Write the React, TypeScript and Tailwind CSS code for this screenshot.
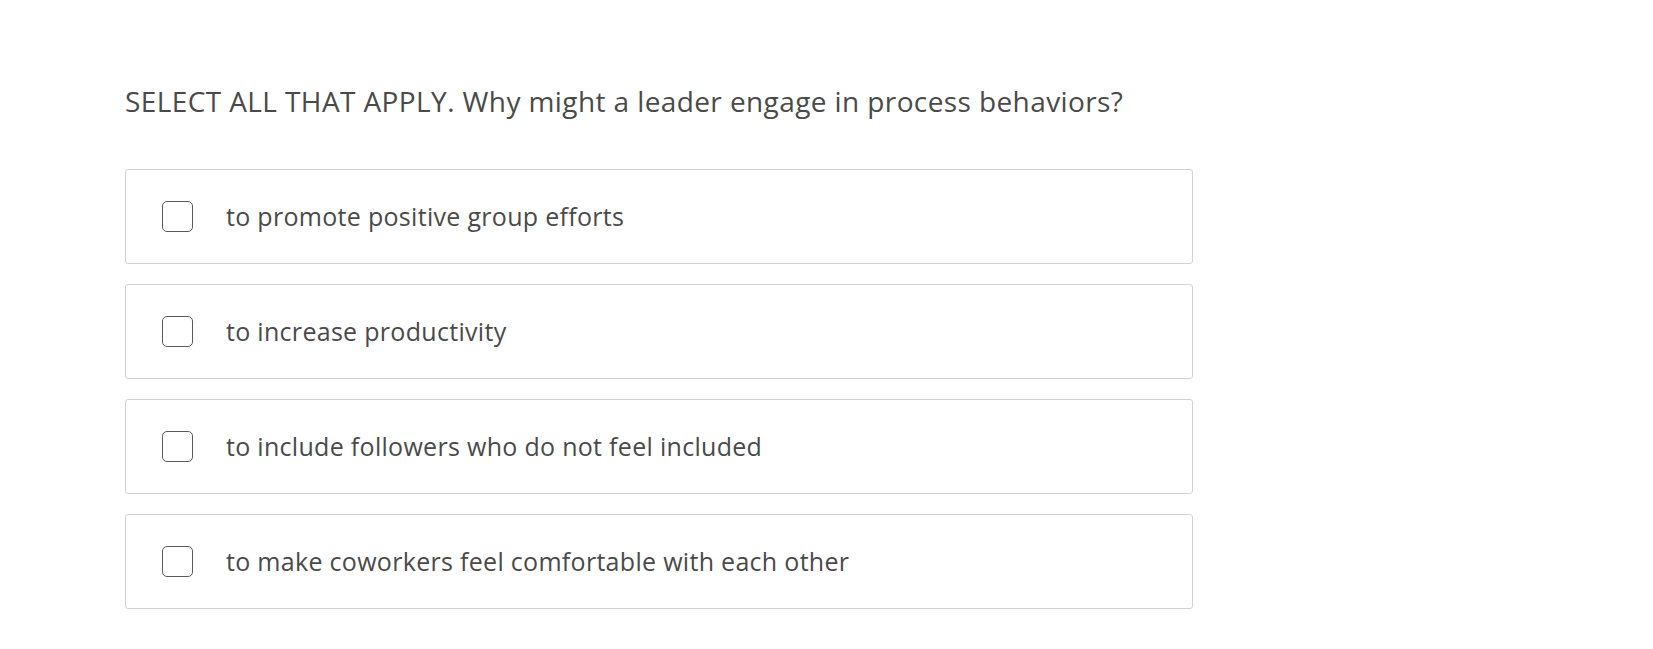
const options = [
  'to promote positive group efforts',
  'to increase productivity',
  'to include followers who do not feel included',
  'to make coworkers feel comfortable with each other',
]

function Option({ label }: { label: string }) {
  return (
    <label className="flex h-[95px] w-[1068px] cursor-pointer items-center rounded-[3px] border border-[#d2d2d2] bg-white pl-[36px]">
      <span className="h-[31px] w-[31px] flex-shrink-0 rounded-[5px] border border-[#5a5a5a]" />
      <span className="ml-[33px] text-[25px] tracking-[0.3px] text-[#4a4a4a]">{label}</span>
    </label>
  )
}

export default function App() {
  return (
    <div className="min-h-[649px] bg-white pl-[125px] pt-[80px] font-['Open_Sans',sans-serif]">
      <h1 className="text-[28px] leading-[42px] font-normal tracking-[0.4px] text-[#4a4a4a]">
        SELECT ALL THAT APPLY. Why might a leader engage in process behaviors?
      </h1>
      <div className="mt-[47px] flex flex-col gap-[20px]">
        {options.map((o) => (
          <Option key={o} label={o} />
        ))}
      </div>
    </div>
  )
}
